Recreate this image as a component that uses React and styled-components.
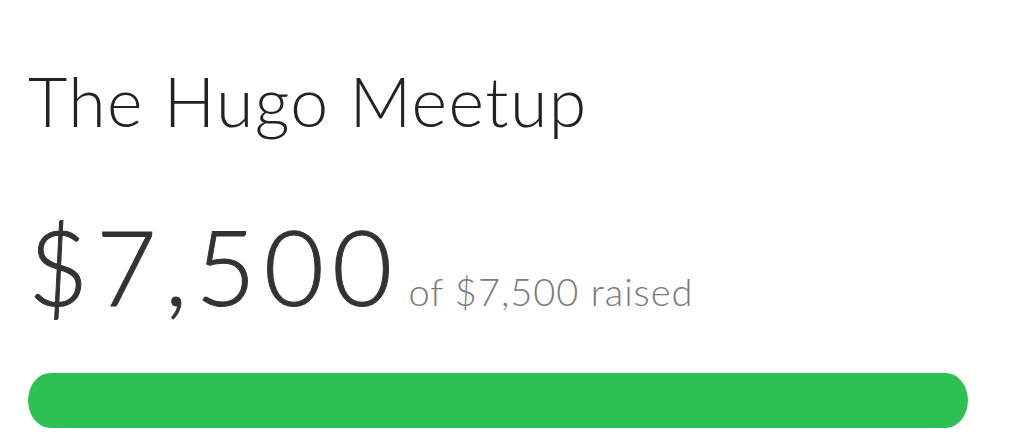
import React from 'react'
import styled, { createGlobalStyle } from 'styled-components'

const Global = createGlobalStyle`
  html, body {
    margin: 0;
    padding: 0;
    background: #fff;
  }
  body {
    font-family: Lato, "Noto Sans", sans-serif;
  }
`

const Card = styled.section`
  width: 1024px;
  height: 448px;
  box-sizing: border-box;
  padding: 61px 56px 0 28px;
  overflow: hidden;
`

const Title = styled.h1`
  margin: 0;
  font-weight: 300;
  font-size: 68px;
  line-height: 80px;
  color: #222;
  letter-spacing: 1.4px;
`

const Stats = styled.div`
  display: flex;
  align-items: baseline;
  margin-top: 70px;
  gap: 8px;
`

const Amount = styled.span`
  font-weight: 300;
  font-size: 104px;
  line-height: 110px;
  color: #333;
  letter-spacing: 8px;
  -webkit-text-stroke: 1px #333;
`

const Goal = styled.span`
  font-weight: 300;
  font-size: 38px;
  color: #7a7a7a;
  letter-spacing: 1px;
`

const Track = styled.div`
  margin-top: 52px;
  height: 55px;
  width: 940px;
  border-radius: 22px / 27px;
  background: #eee;
  overflow: hidden;
`

const Fill = styled.div`
  height: 100%;
  background: #2dc053;
  border-radius: 22px / 27px;
`

export default function App() {
  const raised = 7500
  const goal = 7500
  const pct = Math.min(100, (raised / goal) * 100)
  return (
    <>
      <Global />
      <Card>
        <Title>The Hugo Meetup</Title>
        <Stats>
          <Amount>${raised.toLocaleString('en-US')}</Amount>
          <Goal>of ${goal.toLocaleString('en-US')} raised</Goal>
        </Stats>
        <Track>
          <Fill style={{ width: `${pct}%` }} />
        </Track>
      </Card>
    </>
  )
}
